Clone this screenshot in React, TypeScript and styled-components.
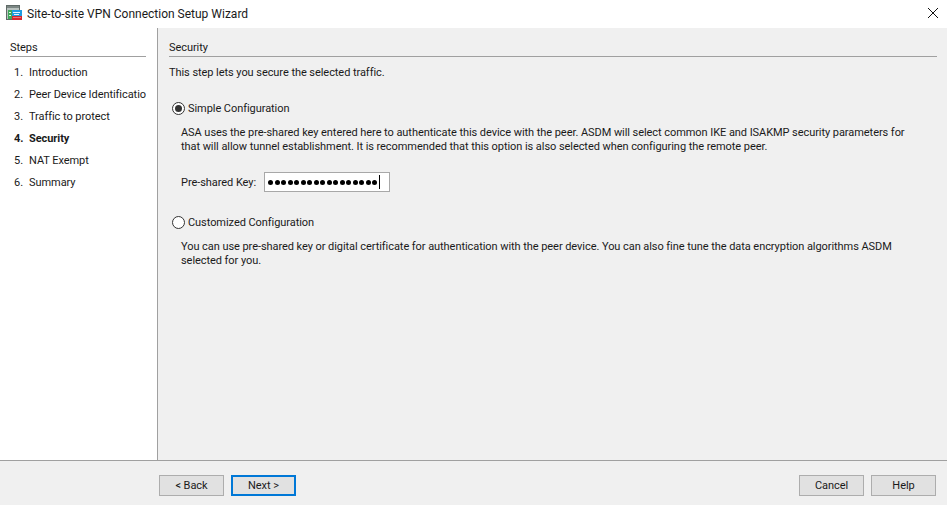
import React from "react";
import styled, { createGlobalStyle } from "styled-components";

const Global = createGlobalStyle`
  html, body { margin: 0; padding: 0; background: #fff; }
  body { font-family: Roboto, "Noto Sans", sans-serif; font-size: 11px; letter-spacing: -0.06px; color: #000; }
  #root { width: 947px; height: 505px; }
`;

const Window = styled.div`
  width: 947px;
  height: 505px;
  display: flex;
  flex-direction: column;
  overflow: hidden;
`;

const TitleBar = styled.header`
  height: 28px;
  flex: none;
  display: flex;
  align-items: center;
  padding: 0 9px 0 6px;
  gap: 5px;
  background: #fff;
`;

const Title = styled.span`
  flex: 1;
  font-size: 12px;
  letter-spacing: 0;
  color: #1a1a1a;
`;

const Body = styled.div`
  flex: 1;
  display: flex;
  min-height: 0;
`;

const Sidebar = styled.aside`
  box-sizing: content-box;
  width: 136px;
  flex: none;
  padding: 12px 11px 0 10px;
  background: #fff;
  border-right: 1px solid #a0a0a0;
`;

const SectionHeading = styled.div`
  height: 16px;
  line-height: 16px;
  border-bottom: 1px solid #a0a0a0;
  color: #1a1a1a;
`;

const StepList = styled.ol`
  list-style: none;
  margin: 4px 0 0;
  padding: 0;
`;

const Step = styled.li<{ $active?: boolean }>`
  display: flex;
  height: 22px;
  align-items: center;
  padding-left: 4px;
  overflow: hidden;
  white-space: nowrap;
  font-weight: ${(p) => (p.$active ? 700 : 400)};
  color: #1a1a1a;
`;

const StepNumber = styled.span`
  width: 15px;
  flex: none;
`;

const Content = styled.main`
  flex: 1;
  background: #f0f0f0;
  padding: 12px 10px 0 11px;
`;

const Lead = styled.p`
  margin: 5px 0 0;
  height: 22px;
  line-height: 22px;
  color: #1a1a1a;
`;

const RadioRow = styled.label<{ $top: number }>`
  display: flex;
  align-items: center;
  gap: 3px;
  height: 16px;
  margin-top: ${(p) => p.$top}px;
  margin-left: 3px;
  color: #1a1a1a;
`;

const RadioOuter = styled.span`
  box-sizing: border-box;
  width: 13px;
  height: 13px;
  border-radius: 50%;
  border: 1px solid #333;
  background: #fff;
  display: flex;
  align-items: center;
  justify-content: center;
`;

const RadioDot = styled.span`
  width: 7px;
  height: 7px;
  border-radius: 50%;
  background: #333;
`;

const Description = styled.p<{ $top: number }>`
  margin: ${(p) => p.$top}px 0 0 12px;
  width: 735px;
  line-height: 14px;
  color: #1a1a1a;
`;

const KeyRow = styled.div`
  display: flex;
  align-items: center;
  gap: 8px;
  margin: 18px 0 0 12px;
  height: 20px;
  color: #1a1a1a;
`;

const KeyField = styled.div`
  box-sizing: border-box;
  width: 126px;
  height: 20px;
  background: #fff;
  border: 1px solid #a8a8a8;
  display: flex;
  align-items: center;
  padding-left: 3px;
  gap: 1.5px;
`;

const KeyDot = styled.span`
  width: 5px;
  height: 5px;
  border-radius: 50%;
  background: #000;
  flex: none;
`;

const Caret = styled.span`
  width: 1px;
  height: 14px;
  background: #000;
`;

const Footer = styled.footer`
  box-sizing: border-box;
  height: 45px;
  flex: none;
  background: #f0f0f0;
  border-top: 1px solid #a0a0a0;
  display: flex;
  align-items: flex-start;
  padding: 14px 11px 0 159px;
`;

const Group = styled.div<{ $push?: boolean }>`
  display: flex;
  gap: 7px;
  margin-left: ${(p) => (p.$push ? "auto" : 0)};
`;

const Button = styled.button<{ $primary?: boolean }>`
  box-sizing: border-box;
  width: 65px;
  height: 21px;
  padding: 0;
  font: inherit;
  letter-spacing: inherit;
  color: #1a1a1a;
  background: #e1e1e1;
  border: ${(p) => (p.$primary ? "2px solid #0078d7" : "1px solid #adadad")};
`;

const CloseIcon = styled.svg`
  width: 10px;
  height: 10px;
  flex: none;
  margin-bottom: 2px;
`;

const LogoIcon = styled.svg`
  width: 16px;
  height: 16px;
  flex: none;
  margin-bottom: 2px;
`;

const AppIcon = () => (
  <LogoIcon viewBox="0 0 16 16">
    <rect x="0.5" y="0.5" width="13" height="14" fill="#b9c2bf" stroke="#5f6a67" />
    <rect x="1" y="1" width="12" height="2" fill="#7b8683" />
    <rect x="2" y="5" width="4" height="9" fill="#3fa85a" />
    <rect x="3" y="7" width="2" height="1" fill="#dff5e3" />
    <rect x="3" y="10" width="2" height="1" fill="#dff5e3" />
    <rect x="6" y="5" width="10" height="6" fill="#1f9be0" />
    <rect x="7" y="7" width="7" height="1" fill="#e4f5ff" />
    <rect x="8" y="9" width="5" height="1" fill="#e4f5ff" />
    <rect x="6" y="11" width="10" height="4" fill="#d6262e" />
    <rect x="7" y="12" width="8" height="1" fill="#f07078" />
  </LogoIcon>
);

const steps = ["Introduction", "Peer Device Identification", "Traffic to protect", "Security", "NAT Exempt", "Summary"];

export default function App() {
  return (
    <Window>
      <Global />
      <TitleBar>
        <AppIcon />
        <Title>Site-to-site VPN Connection Setup Wizard</Title>
        <CloseIcon viewBox="0 0 10 10">
          <path d="M0 0L10 10M10 0L0 10" stroke="#111" strokeWidth="1" fill="none" />
        </CloseIcon>
      </TitleBar>
      <Body>
        <Sidebar>
          <SectionHeading>Steps</SectionHeading>
          <StepList>
            {steps.map((s, i) => (
              <Step key={s} $active={i === 3}>
                <StepNumber>{i + 1}.</StepNumber>
                {s}
              </Step>
            ))}
          </StepList>
        </Sidebar>
        <Content>
          <SectionHeading>Security</SectionHeading>
          <Lead>This step lets you secure the selected traffic.</Lead>
          <RadioRow $top={16}>
            <RadioOuter>
              <RadioDot />
            </RadioOuter>
            Simple Configuration
          </RadioRow>
          <Description $top={10}>
            ASA uses the pre-shared key entered here to authenticate this device with the peer. ASDM will select common IKE and ISAKMP security parameters for that will allow tunnel establishment. It is recommended that this option is also selected when configuring the remote peer.
          </Description>
          <KeyRow>
            Pre-shared Key:
            <KeyField>
              {Array.from({ length: 17 }, (_, i) => (
                <KeyDot key={i} />
              ))}
              <Caret />
            </KeyField>
          </KeyRow>
          <RadioRow $top={22}>
            <RadioOuter />
            Customized Configuration
          </RadioRow>
          <Description $top={10}>
            You can use pre-shared key or digital certificate for authentication with the peer device. You can also fine tune the data encryption algorithms ASDM selected for you.
          </Description>
        </Content>
      </Body>
      <Footer>
        <Group>
          <Button>&lt; Back</Button>
          <Button $primary>Next &gt;</Button>
        </Group>
        <Group $push>
          <Button>Cancel</Button>
          <Button>Help</Button>
        </Group>
      </Footer>
    </Window>
  );
}
